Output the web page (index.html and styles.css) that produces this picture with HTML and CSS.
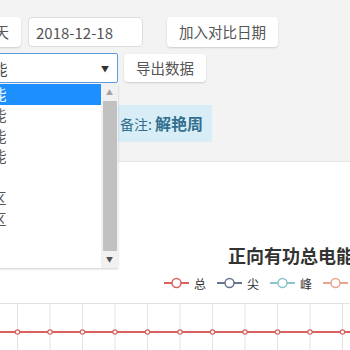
FILE: index.html
```html
<!DOCTYPE html>
<html>
<head>
  <meta charset="utf-8">
  <link rel="stylesheet" href="styles.css">
</head>
<body>
  <div class="page">
    <div class="toolbar">
      <div class="tool-row">
        <button class="btn">前一天</button>
        <button class="btn">后一天</button>
        <input type="text" class="date-input" value="2018-12-18">
        <button class="btn btn-compare">加入对比日期</button>
      </div>

      <div class="tool-row">
        <div class="select-wrap">
          <div class="select">
            <span class="select-text">正向有功总电能</span>
            <span class="caret">▼</span>
          </div>
          <div class="dropdown">
            <ul class="option-list">
              <li class="active">正向有功总电能</li>
              <li>反向有功总电能</li>
              <li>正向无功总电能</li>
              <li>反向无功总电能</li>
              <li>功率因数</li>
              <li>第一象限无功区</li>
              <li>第四象限无功区</li>
              <li>电压</li>
              <li>电流</li>
              <li>功率</li>
            </ul>
            <div class="scrollbar">
              <span class="scroll-arrow up">▲</span>
              <div class="scroll-thumb"></div>
              <span class="scroll-arrow down">▼</span>
            </div>
          </div>
        </div>
        <button class="btn btn-export">导出数据</button>
      </div>

      <div class="note">备注: <b>解艳周</b></div>
    </div>

    <div class="chart">
      <div class="chart-title">正向有功总电能</div>
      <div class="legend">
        <div class="legend-item">
          <svg width="25" height="12"><line x1="0" y1="6" x2="25" y2="6" stroke="#d9625f" stroke-width="2"/><circle cx="12.5" cy="6" r="4.5" fill="#fff" stroke="#d9625f" stroke-width="1.5"/></svg>
          <span>总</span>
        </div>
        <div class="legend-item">
          <svg width="25" height="12"><line x1="0" y1="6" x2="25" y2="6" stroke="#66758f" stroke-width="2"/><circle cx="12.5" cy="6" r="4.5" fill="#fff" stroke="#66758f" stroke-width="1.5"/></svg>
          <span>尖</span>
        </div>
        <div class="legend-item">
          <svg width="25" height="12"><line x1="0" y1="6" x2="25" y2="6" stroke="#8ac4cc" stroke-width="2"/><circle cx="12.5" cy="6" r="4.5" fill="#fff" stroke="#8ac4cc" stroke-width="1.5"/></svg>
          <span>峰</span>
        </div>
        <div class="legend-item">
          <svg width="25" height="12"><line x1="0" y1="6" x2="25" y2="6" stroke="#eda48e" stroke-width="2"/><circle cx="12.5" cy="6" r="4.5" fill="#fff" stroke="#eda48e" stroke-width="1.5"/></svg>
          <span>平</span>
        </div>
        <div class="legend-item">
          <svg width="25" height="12"><line x1="0" y1="6" x2="25" y2="6" stroke="#9fc79a" stroke-width="2"/><circle cx="12.5" cy="6" r="4.5" fill="#fff" stroke="#9fc79a" stroke-width="1.5"/></svg>
          <span>谷</span>
        </div>
      </div>

      <svg class="plot" width="824" height="60">
        <line x1="8" y1="0.5" x2="816" y2="0.5" stroke="#e3e3e3" stroke-width="1"/>
        <g stroke="#e3e3e3" stroke-width="1">
          <line x1="8.5" y1="0" x2="8.5" y2="60"/>
          <line x1="41" y1="0" x2="41" y2="60"/>
          <line x1="73.5" y1="0" x2="73.5" y2="60"/>
          <line x1="106" y1="0" x2="106" y2="60"/>
          <line x1="138.5" y1="0" x2="138.5" y2="60"/>
          <line x1="171" y1="0" x2="171" y2="60"/>
          <line x1="203.5" y1="0" x2="203.5" y2="60"/>
          <line x1="236" y1="0" x2="236" y2="60"/>
          <line x1="268.5" y1="0" x2="268.5" y2="60"/>
          <line x1="301" y1="0" x2="301" y2="60"/>
          <line x1="333.5" y1="0" x2="333.5" y2="60"/>
          <line x1="366" y1="0" x2="366" y2="60"/>
          <line x1="398.5" y1="0" x2="398.5" y2="60"/>
          <line x1="431" y1="0" x2="431" y2="60"/>
          <line x1="463.5" y1="0" x2="463.5" y2="60"/>
          <line x1="496" y1="0" x2="496" y2="60"/>
        </g>
        <line x1="8" y1="29" x2="496" y2="29" stroke="#d9625f" stroke-width="2"/>
        <g fill="#fff" stroke="#d9625f" stroke-width="1.2">
          <circle cx="138.5" cy="29" r="2.2"/>
          <circle cx="171" cy="29" r="2.2"/>
          <circle cx="203.5" cy="29" r="2.2"/>
          <circle cx="236" cy="29" r="2.2"/>
          <circle cx="268.5" cy="29" r="2.2"/>
          <circle cx="301" cy="29" r="2.2"/>
          <circle cx="333.5" cy="29" r="2.2"/>
          <circle cx="366" cy="29" r="2.2"/>
          <circle cx="398.5" cy="29" r="2.2"/>
          <circle cx="431" cy="29" r="2.2"/>
          <circle cx="463.5" cy="29" r="2.2"/>
        </g>
      </svg>
    </div>
  </div>
</body>
</html>
```

FILE: styles.css
```css
body {
  margin: 0;
  background: #fff;
  font-family: "Noto Sans CJK SC", "Liberation Sans", sans-serif;
  overflow: hidden;
}

.page {
  margin-left: -121px;
  width: 824px;
}

.toolbar {
  background: #f3f3f3;
  padding: 17px 0 19px;
  border-bottom: 1px solid #e6e6e6;
}

.tool-row {
  display: flex;
  align-items: center;
  gap: 7px;
  height: 30px;
}

.tool-row + .tool-row {
  margin-top: 6px;
}

.btn {
  height: 30px;
  padding: 0 12px;
  background: #fff;
  border: none;
  border-radius: 4px;
  box-shadow: 0 1px 2px rgba(0, 0, 0, 0.16);
  font-family: inherit;
  font-size: 14.5px;
  color: #555;
  line-height: 30px;
}

.btn-compare {
  margin-left: 17px;
}

.btn-export {
  margin-left: -1px;
  height: 28px;
  line-height: 28px;
}

.date-input {
  box-sizing: border-box;
  width: 115px;
  height: 30px;
  padding: 0 7px;
  border: 1px solid #dedede;
  border-radius: 4px;
  background: #fff;
  font-family: inherit;
  font-size: 15px;
  color: #555;
}

.select-wrap {
  position: relative;
}

.select {
  box-sizing: border-box;
  width: 239px;
  height: 30px;
  padding: 0 8px 0 26px;
  display: flex;
  align-items: center;
  justify-content: space-between;
  background: #fff;
  border: 1px solid #5f9bdc;
  border-radius: 2px;
  font-size: 14.5px;
  color: #444;
}

.caret {
  font-size: 8px;
  color: #333;
}

.dropdown {
  position: absolute;
  top: 31px;
  left: 0;
  width: 239px;
  height: 184px;
  display: flex;
  background: #fff;
  box-shadow: 0 1px 2px rgba(0, 0, 0, 0.2);
  z-index: 5;
}

.option-list {
  flex: 1;
  margin: 0;
  padding: 0;
  list-style: none;
  overflow: hidden;
}

.option-list li {
  height: 20.8px;
  line-height: 20.8px;
  padding-left: 26px;
  font-size: 14.5px;
  color: #555;
  white-space: nowrap;
}

.option-list li.active {
  background: #1e8fff;
  color: #fff;
}

.scrollbar {
  width: 17px;
  display: flex;
  flex-direction: column;
  align-items: center;
  background: #f1f1f1;
}

.scroll-arrow {
  height: 17px;
  line-height: 17px;
  font-size: 7px;
}

.scroll-arrow.up {
  color: #a3a3a3;
}

.scroll-arrow.down {
  color: #505050;
}

.scroll-thumb {
  flex: 1;
  width: 14px;
  background: #c1c1c1;
}

.note {
  display: inline-block;
  margin: 22px 0 0 232px;
  height: 37px;
  line-height: 37px;
  padding: 0 9px;
  background: #d9edf7;
  color: #31708f;
  font-size: 14px;
}

.note b {
  font-size: 16px;
}

.chart {
  padding-top: 81px;
}

.chart-title {
  text-align: center;
  font-size: 18px;
  font-weight: bold;
  line-height: 24px;
  color: #333;
}

.legend {
  margin-top: 9px;
  display: flex;
  justify-content: center;
  gap: 11px;
  height: 14px;
}

.legend-item {
  display: flex;
  align-items: center;
  gap: 5px;
  font-size: 12px;
  color: #333;
}

.plot {
  display: block;
  margin-top: 13px;
}
```
